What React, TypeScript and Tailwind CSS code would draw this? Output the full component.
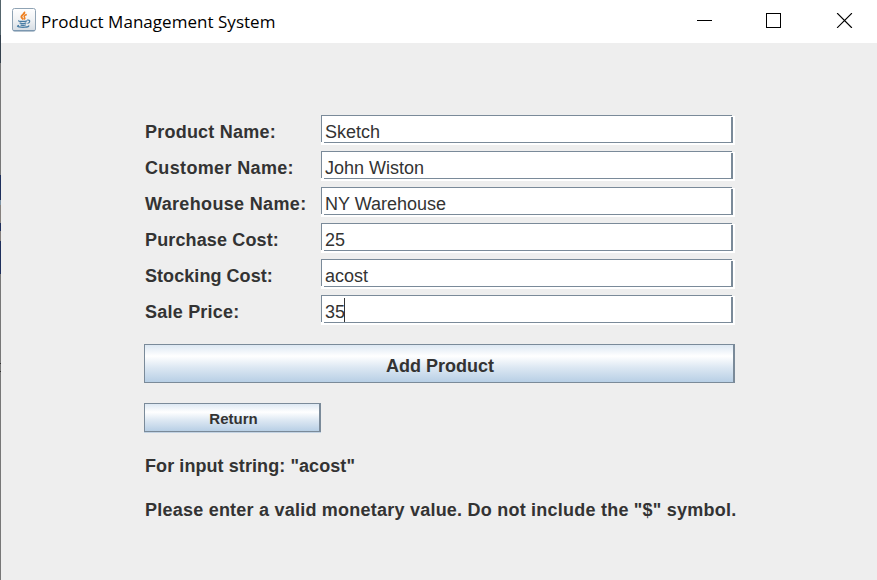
const fields = [
  { label: "Product Name:", value: "Sketch", tracking: "tracking-[0.22px]" },
  { label: "Customer Name:", value: "John Wiston", tracking: "tracking-[0.35px]" },
  { label: "Warehouse Name:", value: "NY Warehouse", tracking: "tracking-[0.34px]" },
  { label: "Purchase Cost:", value: "25", tracking: "tracking-[0.14px]" },
  { label: "Stocking Cost:", value: "acost", tracking: "tracking-[0.06px]" },
  { label: "Sale Price:", value: "35", tracking: "tracking-[0.22px]", caret: true },
];

function JavaIcon() {
  return (
    <svg className="h-6 w-6" viewBox="0 0 24 24" fill="none">
      <defs>
        <linearGradient id="tile" x1="0" y1="0" x2="0" y2="1">
          <stop offset="0" stopColor="#ffffff" />
          <stop offset="0.5" stopColor="#f0f2f4" />
          <stop offset="1" stopColor="#d5dce3" />
        </linearGradient>
      </defs>
      <rect x="0.5" y="0.5" width="23" height="22.5" rx="2" fill="url(#tile)" stroke="#8fa3b4" />
      <path d="M1.5 22.7h21" stroke="#5c7f9f" strokeWidth="0.8" />
      <path d="M12.2 3.8c1.5 2.2-4 3.4-2.6 5.6.4.8 1.2 1.3 1.8 2.1" stroke="#ee8022" strokeWidth="1.9" />
      <path d="M14.8 6.5c-2.8 1-3.1 2-2.2 3 .6.8.4 1.3-.4 2" stroke="#ee8022" strokeWidth="1.5" />
      <path d="M7 12.6c-1.8.8 5.2 1.3 8 .3M7.6 14.8c1.8.8 4.8.8 6.7.1M8.6 16.8c1.4.7 3.9.7 5.2 0" stroke="#477ca4" strokeWidth="1.3" />
      <path d="M15.2 12.2c3.4-.8 3.2 2.4.3 3.3" stroke="#477ca4" strokeWidth="1.2" />
      <path d="M7 17.3c-4.8 1.4 2.5 2.2 6 1.9 2.5-.2 4.8-.8 3.4-1.7" stroke="#477ca4" strokeWidth="1.2" />
    </svg>
  );
}

function TextField({ value, caret }: { value: string; caret?: boolean }) {
  return (
    <div className="relative h-[30px] w-[414px] bg-white pr-[2px] pb-[2px]">
      <div className="flex h-[28px] items-center border-y border-r-2 border-l border-[#7a8a99] pt-[5px] pl-[3px] text-[18px] leading-[20px] whitespace-nowrap">
        <span>{value}</span>
        {caret && <span className="-mt-[3px] -ml-px h-[24px] w-px bg-[#333333]" />}
      </div>
      <span className="absolute top-0 right-0 h-px w-[3px] bg-[#eeeeee]" />
      <span className="absolute top-px right-[2px] h-px w-[2px] bg-white" />
      <span className="absolute bottom-[2px] left-0 h-px w-[3px] bg-white" />
    </div>
  );
}

export default function App() {
  return (
    <div className="flex h-[580px] w-[877px] overflow-hidden bg-[#eeeeee] font-['Liberation_Sans',Arial,sans-serif] text-[#333333]">
      <div className="flex w-px shrink-0 flex-col bg-[#777777]">
        <div className="h-[35px] bg-[#53646b]" />
        <div className="h-[28px] bg-[#34414d]" />
        <div className="h-[112px] bg-[#777777]" />
        <div className="h-[25px] bg-[#1e2f5c]" />
        <div className="h-[5px] bg-[#7d93a5]" />
        <div className="h-[18px] bg-[#85807d]" />
        <div className="h-[8px] bg-[#1e2f5c]" />
        <div className="h-[10px] bg-[#85807d]" />
        <div className="h-[33px] bg-[#1e2f5c]" />
        <div className="mt-[89px] h-px bg-[#333333]" />
        <div className="mt-[7px] h-px bg-[#333333]" />
      </div>
      <div className="flex min-w-0 grow flex-col">
        <header className="flex h-[43px] shrink-0 items-start bg-white text-black">
          <div className="mt-[8px] ml-[11px] h-6 w-6">
            <JavaIcon />
          </div>
          <h1 className="mt-[10px] ml-[5px] font-['Open_Sans','Noto_Sans',sans-serif] text-[17px] leading-[23px] tracking-[0.03px] whitespace-nowrap">
            Product Management System
          </h1>
          <svg className="mt-[13px] mr-[24px] ml-auto h-[15px] w-[156px]" viewBox="0 0 156 15" fill="none" stroke="#000" shapeRendering="crispEdges">
            <path d="M0 7.5h15" />
            <rect x="69.5" y="0.5" width="14" height="14" />
            <path d="M140.5 0.5l14 14M154.5 0.5l-14 14" shapeRendering="auto" strokeWidth="1.1" strokeLinecap="square" />
          </svg>
        </header>
        <main className="flex flex-col pt-[72px] pl-[143px]">
          <div className="flex flex-col gap-[6px]">
            {fields.map((f) => (
              <div key={f.label} className="flex h-[30px]">
                <label className={`w-[177px] pt-[7px] pl-px text-[18px] leading-[20px] font-bold whitespace-nowrap ${f.tracking}`}>
                  {f.label}
                </label>
                <TextField value={f.value} caret={f.caret} />
              </div>
            ))}
          </div>
          <button className="mt-[19px] flex h-[39px] w-[591px] items-center justify-center border-y border-r-2 border-l border-[#7a8a99] bg-[linear-gradient(to_bottom,#dde8f3_0%,#ffffff_30%,#dde8f3_60%,#b8cfe5_100%)] pt-[5px] pl-[2px] text-[18px] leading-[20px] font-bold">
            Add Product
          </button>
          <button className="mt-[20px] flex h-[29px] w-[177px] items-center justify-center border-y border-r-2 border-l border-[#7a8a99] bg-[linear-gradient(to_bottom,#dde8f3_0%,#ffffff_30%,#dde8f3_60%,#b8cfe5_100%)] pt-[3px] pl-[3px] text-[15px] leading-[18px] font-bold shadow-[0_1px_0_#c3d3e3]">
            Return
          </button>
          <p className="mt-[24px] pl-px text-[18px] leading-[20px] font-bold tracking-[0.08px] whitespace-nowrap">For input string: "acost"</p>
          <p className="mt-[24px] pl-px text-[18px] leading-[20px] font-bold tracking-[0.227px] whitespace-nowrap">
            Please enter a valid monetary value. Do not include the "$" symbol.
          </p>
        </main>
      </div>
    </div>
  );
}
